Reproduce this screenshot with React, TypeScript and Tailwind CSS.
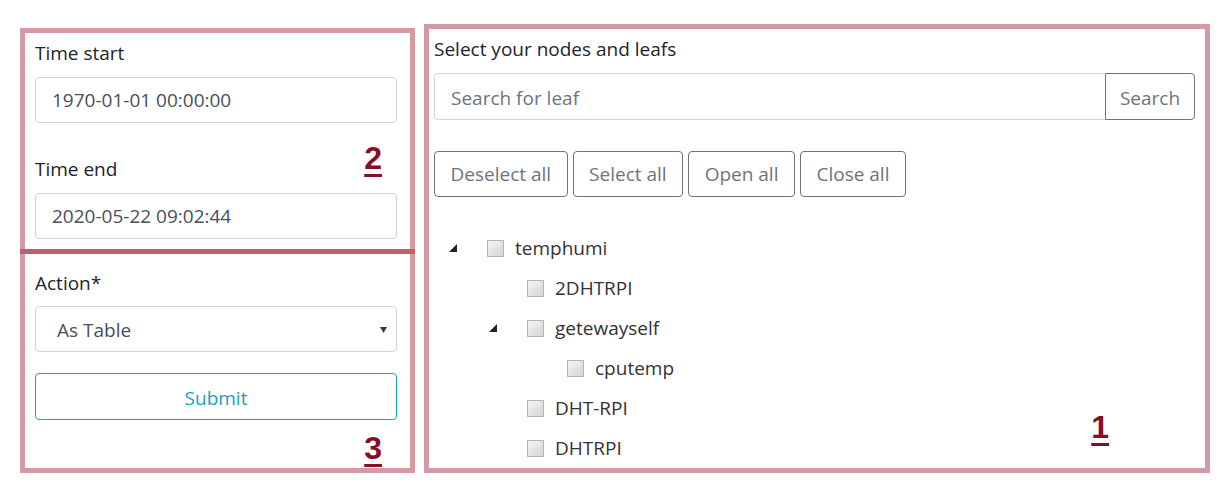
import React from 'react'

type Leaf = { name: string; depth: number; open?: boolean }

const tree: Leaf[] = [
  { name: 'temphumi', depth: 0, open: true },
  { name: '2DHTRPI', depth: 1 },
  { name: 'getewayself', depth: 1, open: true },
  { name: 'cputemp', depth: 2 },
  { name: 'DHT-RPI', depth: 1 },
  { name: 'DHTRPI', depth: 1 },
]

const indent = ['pl-0', 'pl-[40px]', 'pl-[80px]']

function Marker({ n, className }: { n: string; className: string }) {
  return (
    <span
      className={`absolute font-['Liberation_Sans'] text-[32px] font-bold leading-none text-[#880d28] underline decoration-[3px] underline-offset-[5px] ${className}`}
    >
      {n}
    </span>
  )
}

function Checkbox() {
  return (
    <span className="inline-block h-[17px] w-[17px] border border-[#b5b5b5] bg-gradient-to-br from-[#f6f6f6] to-[#d4d4d4]" />
  )
}

function TreeRow({ leaf }: { leaf: Leaf }) {
  return (
    <div className={`flex h-[40px] items-center ${indent[leaf.depth]}`}>
      <span className="flex w-[38px] items-center justify-start">
        {leaf.open && (
          <svg width="8" height="8" viewBox="0 0 8 8">
            <polygon points="8,0 8,8 0,8" fill="#222" />
          </svg>
        )}
      </span>
      <Checkbox />
      <span className="ml-[11px] text-[#333]">{leaf.name}</span>
    </div>
  )
}

export default function App() {
  return (
    <div className="flex h-[490px] w-[1224px] items-start gap-[9px] bg-white pl-[20px] font-['Open_Sans'] text-[19px] text-[#212529]">
      <div className="mt-[28px] flex h-[445px] w-[395px] flex-col border-[5px] border-[#d49aa4]">
        <div className="relative flex flex-col pb-[10px] pl-[10px] pr-[13px] pt-[6px]">
          <label className="leading-[28px]">Time start</label>
          <input
            className="mt-[10px] h-[46px] rounded-[4px] border border-[#ced4da] px-[16px] text-[#495057] outline-none"
            defaultValue="1970-01-01 00:00:00"
          />
          <label className="mt-[32px] leading-[28px]">Time end</label>
          <input
            className="mt-[10px] h-[46px] rounded-[4px] border border-[#ced4da] px-[16px] text-[#495057] outline-none"
            defaultValue="2020-05-22 09:02:44"
          />
          <Marker n="2" className="right-[28px] top-[109px]" />
        </div>
        <div className="-mx-[5px] h-[5px] bg-[#c0606f]" />
        <div className="relative flex flex-1 flex-col pl-[10px] pr-[13px] pt-[15px]">
          <label className="leading-[28px]">Action*</label>
          <div className="relative mt-[9px] flex h-[46px] items-center rounded-[4px] border border-[#ced4da] pl-[21px] pt-[3px] text-[#495057]">
            As Table
            <svg className="absolute right-[9px] top-[20px]" width="7" height="6" viewBox="0 0 7 6">
              <polygon points="0,0 7,0 3.5,6" fill="#343a40" />
            </svg>
          </div>
          <button className="mt-[21px] h-[47px] rounded-[4px] border border-[#17a2b8] pt-[3px] text-[#17a2b8]">Submit</button>
          <Marker n="3" className="bottom-[4px] right-[28px]" />
        </div>
      </div>

      <div className="relative mt-[24px] flex h-[449px] w-[786px] flex-col overflow-hidden border-[5px] border-[#d49aa4] pl-[5px] pr-[10px]">
        <div className="mt-[6px] leading-[28px]">Select your nodes and leafs</div>
        <div className="mt-[10px] flex h-[47px]">
          <input
            className="flex-1 rounded-l-[4px] border border-r-0 border-[#ced4da] px-[16px] pt-[3px] text-[#495057] outline-none placeholder:text-[#6c757d]"
            placeholder="Search for leaf"
          />
          <button className="w-[90px] rounded-r-[4px] border border-[#6c757d] pt-[3px] text-[#6c757d]">Search</button>
        </div>
        <div className="mt-[31px] flex gap-[5px]">
          {['Deselect all', 'Select all', 'Open all', 'Close all'].map((b) => (
            <button
              key={b}
              className="h-[46px] rounded-[4px] border border-[#6c757d] px-[15.5px] pt-[1px] text-[#6c757d]"
            >
              {b}
            </button>
          ))}
        </div>
        <div className="mt-[31px] flex flex-col pl-[15px]">
          {tree.map((leaf) => (
            <TreeRow key={leaf.name} leaf={leaf} />
          ))}
        </div>
        <Marker n="1" className="right-[96px] top-[382px]" />
      </div>
    </div>
  )
}
